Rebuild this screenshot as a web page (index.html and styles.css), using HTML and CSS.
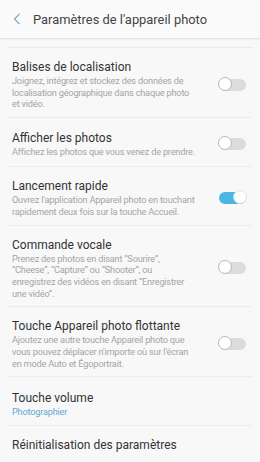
FILE: index.html
```html
<!DOCTYPE html>
<html lang="fr">
<head>
    <meta charset="UTF-8">
    <meta name="viewport" content="width=device-width, initial-scale=1.0">
    <title>Paramètres de l'appareil photo</title>
    <link rel="stylesheet" href="styles.css">
</head>
<body>
    <div class="header">
        <svg class="back" width="8" height="12" viewBox="0 0 8 12">
            <path d="M6.5 0.8 L1.5 6 L6.5 11.2" fill="none" stroke="#6ba8cb" stroke-width="1.1"/>
        </svg>
        <div class="header-title">Paramètres de l'appareil photo</div>
    </div>
    <div class="list">
        <div class="item">
            <div class="text">
                <div class="title">Balises de localisation</div>
                <div class="sub">Joignez, intégrez et stockez des données de<br>localisation géographique dans chaque photo<br>et vidéo.</div>
            </div>
            <div class="toggle"></div>
        </div>
        <div class="item">
            <div class="text">
                <div class="title">Afficher les photos</div>
                <div class="sub">Affichez les photos que vous venez de prendre.</div>
            </div>
            <div class="toggle"></div>
        </div>
        <div class="item">
            <div class="text">
                <div class="title">Lancement rapide</div>
                <div class="sub">Ouvrez l'application Appareil photo en touchant<br>rapidement deux fois sur la touche Accueil.</div>
            </div>
            <div class="toggle on"></div>
        </div>
        <div class="item">
            <div class="text">
                <div class="title">Commande vocale</div>
                <div class="sub">Prenez des photos en disant “Sourire”,<br>“Cheese”, “Capture” ou “Shooter”, ou<br>enregistrez des vidéos en disant “Enregistrer<br>une vidéo”.</div>
            </div>
            <div class="toggle"></div>
        </div>
        <div class="item">
            <div class="text">
                <div class="title">Touche Appareil photo flottante</div>
                <div class="sub">Ajoutez une autre touche Appareil photo que<br>vous pouvez déplacer n'importe où sur l'écran<br>en mode Auto et Égoportrait.</div>
            </div>
            <div class="toggle"></div>
        </div>
        <div class="item">
            <div class="text">
                <div class="title">Touche volume</div>
                <div class="sub value">Photographier</div>
            </div>
        </div>
        <div class="item single">
            <div class="text">
                <div class="title">Réinitialisation des paramètres</div>
            </div>
        </div>
    </div>
</body>
</html>
```

FILE: styles.css
```css
body {
    margin: 0;
    background-color: #f8f8f8;
    font-family: Roboto, "Noto Sans", sans-serif;
    color: #333;
}
.header {
    height: 38px;
    display: flex;
    align-items: center;
    background-color: #fafafa;
    border-bottom: 1px solid #e6e6e6;
    box-shadow: 0 1px 1px rgba(0, 0, 0, 0.03);
}
.back {
    margin-left: 13px;
    margin-right: 12px;
}
.header-title {
    font-size: 12.9px;
    color: #444;
}
.list {
    padding: 8px 8px 0 8px;
}
.item {
    display: flex;
    align-items: center;
    box-sizing: border-box;
    min-height: 49px;
    padding: 11px 4px 7px 4px;
    border-top: 1px solid #ececec;
}
.item.single {
    min-height: 0;
}
.text {
    flex: 1;
}
.title {
    font-size: 12px;
    line-height: 16px;
    color: #333;
}
.sub {
    font-size: 9.2px;
    letter-spacing: -0.2px;
    line-height: 11.7px;
    color: #a5a5a5;
    white-space: nowrap;
}
.sub.value {
    color: #5fa9d1;
}
.toggle {
    position: relative;
    width: 27px;
    height: 12px;
    border-radius: 6px;
    background-color: #dcdcdc;
    margin-right: 2px;
}
.toggle::after {
    content: "";
    position: absolute;
    left: -1px;
    top: -2px;
    width: 14px;
    height: 14px;
    box-sizing: border-box;
    border-radius: 50%;
    background-color: #fff;
    border: 1px solid #b8b8b8;
}
.toggle.on {
    background-color: #4bb5e3;
}
.toggle.on::after {
    left: 14px;
    border-color: #ddd;
}
```
